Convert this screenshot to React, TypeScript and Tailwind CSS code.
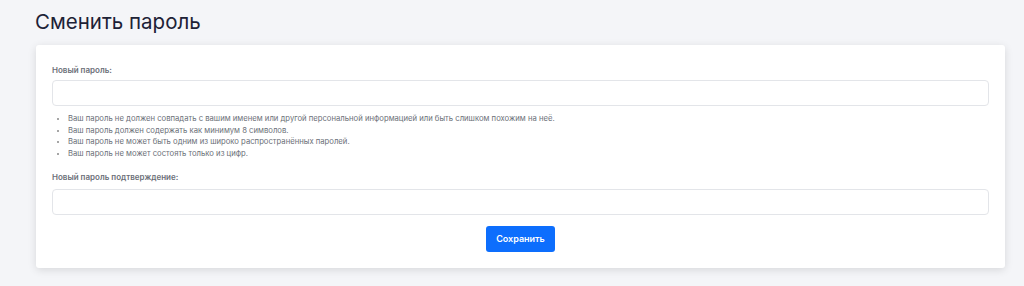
import React from "react";

export default function App() {
  const rules = [
    "Ваш пароль не должен совпадать с вашим именем или другой персональной информацией или быть слишком похожим на неё.",
    "Ваш пароль должен содержать как минимум 8 символов.",
    "Ваш пароль не может быть одним из широко распространённых паролей.",
    "Ваш пароль не может состоять только из цифр.",
  ];
  return (
    <div
      className="w-[1024px] h-[286px] bg-[#f4f5f8] overflow-hidden"
      style={{ fontFamily: "Inter, 'Noto Sans', sans-serif" }}
    >
      <h1 className="pl-[35px] pt-[8px] h-[45px] text-[20.5px] leading-[28px] text-[#1d2236] font-normal">
        Сменить пароль
      </h1>
      <div className="ml-[36px] mr-[19px] h-[223px] bg-white rounded-[3px] shadow-[0_2px_8px_rgba(0,0,0,0.12)] px-[16px] pt-[20px]">
        <label className="block text-[8px] leading-[10px] font-semibold text-[#6b6f78] mb-[5px]">
          Новый пароль:
        </label>
        <div className="h-[26px] border border-[#e3e5e9] rounded-[4px] bg-white"></div>
        <ul className="mt-[7px] pl-[16px] list-disc text-[7.7px] leading-[11.7px] text-[#6b6f78] marker:text-[#888]">
          {rules.map((r) => (
            <li key={r}>{r}</li>
          ))}
        </ul>
        <label className="block mt-[12px] text-[8px] leading-[10px] font-semibold text-[#6b6f78] mb-[7px]">
          Новый пароль подтверждение:
        </label>
        <div className="h-[26px] border border-[#e3e5e9] rounded-[4px] bg-white"></div>
        <div className="flex justify-center mt-[11px]">
          <button className="w-[69px] h-[26px] rounded-[3px] bg-[#0d6efd] text-white text-[9px] font-semibold">
            Сохранить
          </button>
        </div>
      </div>
    </div>
  );
}
